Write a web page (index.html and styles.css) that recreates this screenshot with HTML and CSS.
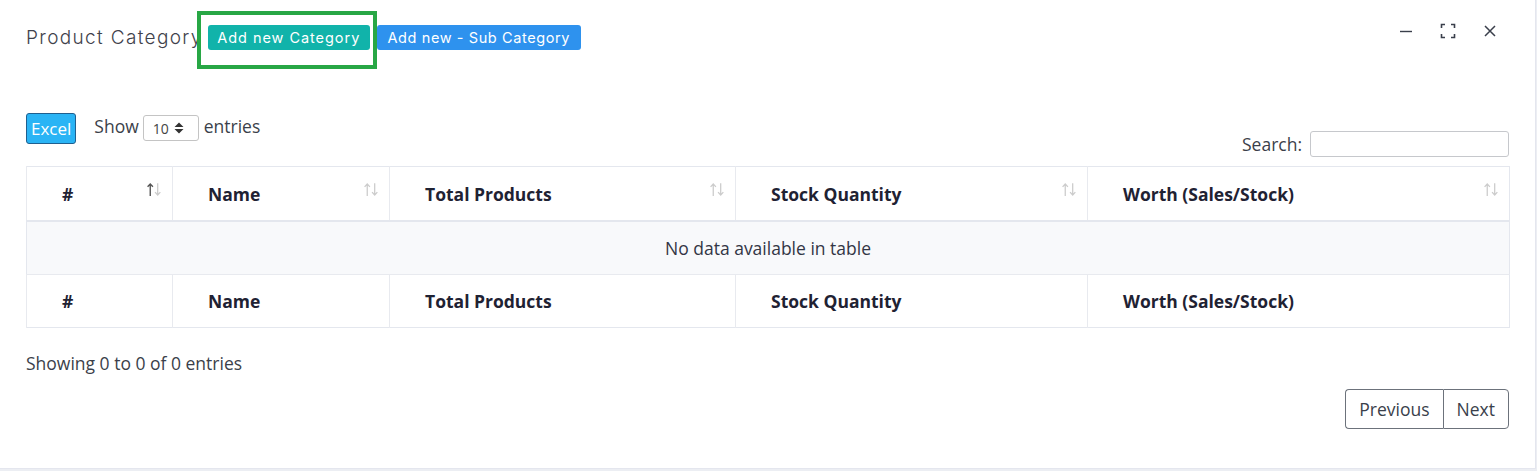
FILE: index.html
```html
<!DOCTYPE html>
<html>
<head>
<meta charset="utf-8">
<link rel="stylesheet" href="styles.css">
</head>
<body>
<div class="card">
  <div class="card-head">
    <div class="title-group">
      <span class="title">Product Category</span>
      <span class="btn btn-teal">Add new Category</span>
      <span class="btn btn-blue">Add new - Sub Category</span>
      <span class="highlight"></span>
    </div>
    <div class="controls">
      <svg class="ctl" width="14" height="14" viewBox="0 0 14 14"><path d="M1 7.5H13" stroke="#3a3f4b" stroke-width="1.4"/></svg>
      <svg class="ctl" width="16" height="16" viewBox="0 0 16 16" fill="none" stroke="#3a3f4b" stroke-width="1.6"><path d="M1.5 5V1.5H5M11 1.5H14.5V5M14.5 11V14.5H11M5 14.5H1.5V11"/></svg>
      <svg class="ctl" width="14" height="14" viewBox="0 0 14 14" fill="none" stroke="#3a3f4b" stroke-width="1.5"><path d="M2 2L12 12M12 2L2 12"/></svg>
    </div>
  </div>
  <div class="card-body">
    <div class="tools">
      <div class="left-tools">
        <span class="excel">Excel</span>
        <span class="len">Show <span class="select">10 <svg width="10" height="12" viewBox="0 0 10 12"><path d="M5 0.5L9.5 5H0.5Z M5 11.5L0.5 7H9.5Z" fill="#333"/></svg></span> entries</span>
      </div>
      <div class="search">Search: <span class="input"></span></div>
    </div>
    <table class="dt">
      <thead>
        <tr>
          <th class="c1">#<svg class="sort" viewBox="0 0 16 14"><path d="M4 13V2M1.5 4.5L4 1.8L6.5 4.5" stroke="#555" stroke-width="1.3" fill="none"/><path d="M11 1V12M8.5 9.5L11 12.2L13.5 9.5" stroke="#ccc" stroke-width="1.2" fill="none"/></svg></th>
          <th class="c2">Name<svg class="sort" viewBox="0 0 16 14"><path d="M4 13V2M1.5 4.5L4 1.8L6.5 4.5" stroke="#ccc" stroke-width="1.2" fill="none"/><path d="M11 1V12M8.5 9.5L11 12.2L13.5 9.5" stroke="#ccc" stroke-width="1.2" fill="none"/></svg></th>
          <th class="c3">Total Products<svg class="sort" viewBox="0 0 16 14"><path d="M4 13V2M1.5 4.5L4 1.8L6.5 4.5" stroke="#ccc" stroke-width="1.2" fill="none"/><path d="M11 1V12M8.5 9.5L11 12.2L13.5 9.5" stroke="#ccc" stroke-width="1.2" fill="none"/></svg></th>
          <th class="c4">Stock Quantity<svg class="sort" viewBox="0 0 16 14"><path d="M4 13V2M1.5 4.5L4 1.8L6.5 4.5" stroke="#ccc" stroke-width="1.2" fill="none"/><path d="M11 1V12M8.5 9.5L11 12.2L13.5 9.5" stroke="#ccc" stroke-width="1.2" fill="none"/></svg></th>
          <th class="c5">Worth (Sales/Stock)<svg class="sort" viewBox="0 0 16 14"><path d="M4 13V2M1.5 4.5L4 1.8L6.5 4.5" stroke="#ccc" stroke-width="1.2" fill="none"/><path d="M11 1V12M8.5 9.5L11 12.2L13.5 9.5" stroke="#ccc" stroke-width="1.2" fill="none"/></svg></th>
        </tr>
      </thead>
      <tbody>
        <tr><td class="empty" colspan="5">No data available in table</td></tr>
      </tbody>
      <tfoot>
        <tr>
          <th>#</th><th>Name</th><th>Total Products</th><th>Stock Quantity</th><th>Worth (Sales/Stock)</th>
        </tr>
      </tfoot>
    </table>
    <div class="info">Showing 0 to 0 of 0 entries</div>
    <div class="pager">
      <span class="pbtn">Previous</span><span class="pbtn">Next</span>
    </div>
  </div>
</div>
</body>
</html>
```
FILE: styles.css
```css
html, body { margin: 0; padding: 0; }
body {
  background: #eceef3;
  font-family: "Open Sans", "Liberation Sans", sans-serif;
  color: #3f4254;
  width: 1537px;
  height: 471px;
  overflow: hidden;
}
.card {
  width: 1535px;
  height: 468px;
  background: #fff;
  border-right: 1px solid #e4e6ee;
  border-bottom: 1px solid #e4e6ee;
  box-sizing: content-box;
}
.card-head {
  display: flex;
  justify-content: space-between;
  align-items: center;
  padding: 24px 38px 0 26px;
  height: 26px;
}
.title-group {
  display: flex;
  align-items: center;
  position: relative;
}
.title {
  font-family: "Inter", "DejaVu Sans", sans-serif;
  font-size: 19px;
  font-weight: 300;
  color: #3f424b;
  margin-right: 5px;
  letter-spacing: 1.35px;
  white-space: nowrap;
}
.btn {
  box-sizing: border-box;
  font-family: "Inter", "DejaVu Sans", sans-serif;
  font-size: 14.5px;
  color: #fff;
  height: 25px;
  line-height: 25px;
  padding: 0;
  border-radius: 3px;
  letter-spacing: 0.95px;
  white-space: nowrap;
  text-align: center;
}
.btn-teal { background: #11b3aa; width: 162px; }
.btn-blue { background: #2e92ee; margin-left: 7px; width: 204px; letter-spacing: 0.6px; }
.highlight {
  position: absolute;
  left: 171px;
  top: -14px;
  width: 172px;
  height: 50px;
  border: 4px solid #28a745;
}
.controls {
  display: flex;
  align-items: center;
  gap: 27px;
  margin-top: -12px;
}
.ctl { display: block; }
.card-body {
  padding: 63px 26px 0 26px;
}
.tools {
  display: flex;
  justify-content: space-between;
  height: 53px;
}
.left-tools {
  display: flex;
  align-items: flex-start;
  gap: 18px;
}
.excel {
  display: block;
  background: #2ab4f5;
  color: #fff;
  border: 1px solid #1f5f8f;
  border-radius: 3px;
  font-size: 17px;
  height: 29px;
  line-height: 29px;
  padding: 0 4px;
}
.len {
  font-size: 17.5px;
  color: #3b3f4a;
  display: flex;
  align-items: center;
  height: 26px;
  gap: 5px;
}
.select {
  display: inline-flex;
  align-items: center;
  gap: 5px;
  width: 45px;
  height: 24px;
  border: 1px solid #c4c4c4;
  border-radius: 3px;
  padding-left: 9px;
  font-size: 14px;
  color: #444;
  margin-top: 4px;
  margin-left: -1px;
}
.search {
  font-size: 17.5px;
  color: #3b3f4a;
  display: flex;
  align-items: center;
  gap: 8px;
  align-self: flex-end;
  margin-bottom: 9px;
}
.input {
  display: block;
  width: 197px;
  height: 24px;
  border: 1px solid #c6c8cc;
  border-radius: 3px;
}
.dt {
  width: 1484px;
  border-collapse: collapse;
  border: 1px solid #e4e7ee;
}
.dt th, .dt td {
  font-size: 17.5px;
  text-align: left;
  color: #1f2233;
}
.dt th {
  font-weight: 700;
  padding: 0 0 0 35px;
  position: relative;
  border-left: 1px solid #e8eaef;
}
.dt thead th {
  height: 53px;
  border-bottom: 2px solid #e4e7ee;
}
.dt tfoot th { height: 52px; }
.c1 { width: 110px; }
.c2 { width: 181px; }
.c3 { width: 310px; }
.c4 { width: 316px; }
.sort {
  position: absolute;
  right: 9px;
  top: 15px;
  width: 17px;
  height: 15px;
}
.dt td.empty {
  text-align: center;
  background: #f8f9fb;
  height: 52px;
  padding: 0;
  font-weight: 400;
  color: #333645;
  border-bottom: 1px solid #e8eaef;
}
.info {
  margin-top: 23px;
  font-size: 17.5px;
  color: #3b3f4a;
}
.pager {
  display: flex;
  justify-content: flex-end;
  margin-top: 14px;
}
.pbtn {
  display: block;
  height: 38px;
  line-height: 38px;
  font-size: 17.5px;
  color: #3a3f4b;
  border: 1px solid #6c727b;
  padding: 0 13px;
}
.pbtn:first-child { border-radius: 4px 0 0 4px; border-right: none; }
.pbtn:last-child { border-radius: 0 4px 4px 0; padding: 0 13px; }
```
